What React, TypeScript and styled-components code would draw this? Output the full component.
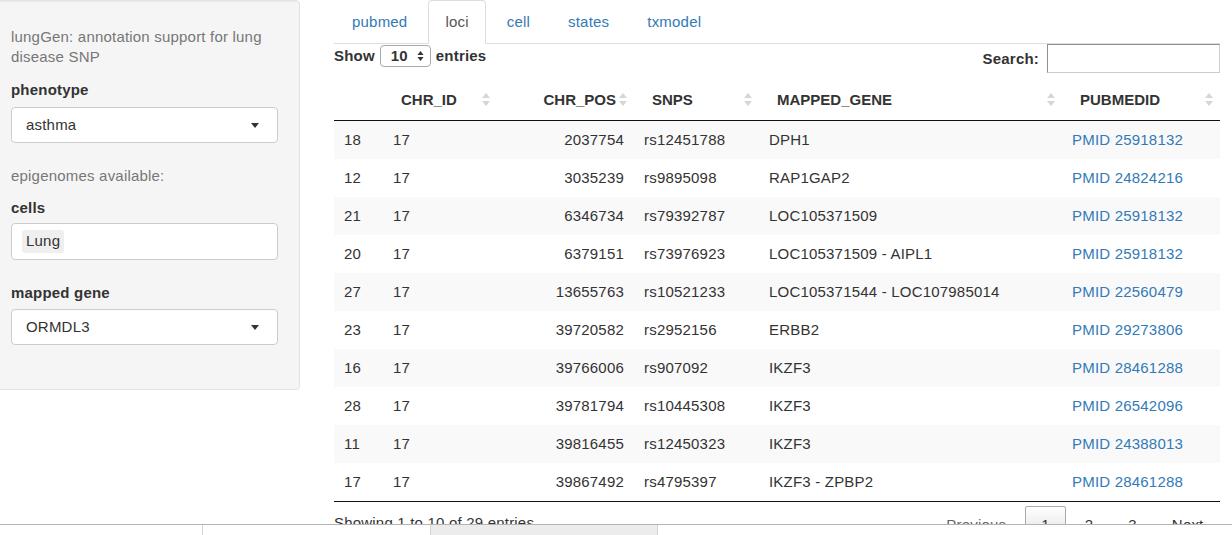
import styled, { createGlobalStyle, css } from 'styled-components';

const GlobalStyle = createGlobalStyle`
  html, body {
    margin: 0;
    padding: 0;
    overflow: hidden;
    background: #fff;
  }
  body {
    font-family: "Liberation Sans", Arial, Helvetica, sans-serif;
    font-size: 15px;
    line-height: 20px;
    letter-spacing: 0.2px;
    color: #333;
  }
  * { box-sizing: border-box; }
`;

type Row = [number, number, number, string, string, string];

const rows: Row[] = [
  [18, 17, 2037754, 'rs12451788', 'DPH1', '25918132'],
  [12, 17, 3035239, 'rs9895098', 'RAP1GAP2', '24824216'],
  [21, 17, 6346734, 'rs79392787', 'LOC105371509', '25918132'],
  [20, 17, 6379151, 'rs73976923', 'LOC105371509 - AIPL1', '25918132'],
  [27, 17, 13655763, 'rs10521233', 'LOC105371544 - LOC107985014', '22560479'],
  [23, 17, 39720582, 'rs2952156', 'ERBB2', '29273806'],
  [16, 17, 39766006, 'rs907092', 'IKZF3', '28461288'],
  [28, 17, 39781794, 'rs10445308', 'IKZF3', '26542096'],
  [11, 17, 39816455, 'rs12450323', 'IKZF3', '24388013'],
  [17, 17, 39867492, 'rs4795397', 'IKZF3 - ZPBP2', '28461288'],
];

const tabs = ['pubmed', 'loci', 'cell', 'states', 'txmodel'];

// column widths of the loci table
const columns = [
  { key: '', width: 49 },
  { key: 'CHR_ID', width: 114 },
  { key: 'CHR_POS', width: 137, right: true },
  { key: 'SNPS', width: 125 },
  { key: 'MAPPED_GENE', width: 303 },
  { key: 'PUBMEDID', width: 158 },
];

const SortIcon = () => (
  <SortSvg width="8" height="15" viewBox="0 0 8 15">
    <path d="M0 6 L4 1 L8 6 Z" fill="#d6d6d6" />
    <path d="M0 9 L4 14 L8 9 Z" fill="#d6d6d6" />
  </SortSvg>
);

const App = () => {
  return (
    <>
      <GlobalStyle />
      <Page>
        <Sidebar>
          <Title>lungGen: annotation support for lung disease SNP</Title>
          <Label $gap={13}>phenotype</Label>
          <SelectBox $gap={7}>
            <span>asthma</span>
            <Caret />
          </SelectBox>
          <Hint>epigenomes available:</Hint>
          <Label $gap={12}>cells</Label>
          <MultiInput>
            <Chip>Lung</Chip>
          </MultiInput>
          <Label $gap={23}>mapped gene</Label>
          <SelectBox $gap={6}>
            <span>ORMDL3</span>
            <Caret />
          </SelectBox>
        </Sidebar>

        <Main>
          <Tabs>
            {tabs.map((t) => (
              <Tab key={t} $active={t === 'loci'}>
                {t}
              </Tab>
            ))}
          </Tabs>

          <Controls>
            <LengthControl>
              Show
              <LengthSelect>
                10
                <svg width="7" height="12" viewBox="0 0 7 12">
                  <path d="M0.5 5 L3.5 1 L6.5 5 Z" fill="#333" />
                  <path d="M0.5 7 L3.5 11 L6.5 7 Z" fill="#333" />
                </svg>
              </LengthSelect>
              entries
            </LengthControl>
            <SearchControl>
              Search:
              <SearchInput />
            </SearchControl>
          </Controls>

          <Table>
            <colgroup>
              {columns.map((c, i) => (
                <col key={i} style={{ width: c.width }} />
              ))}
            </colgroup>
            <thead>
              <tr>
                {columns.map((c, i) => (
                  <Th key={i} $right={c.right}>
                    {c.key}
                    {c.key && <SortIcon />}
                  </Th>
                ))}
              </tr>
            </thead>
            <tbody>
              {rows.map((r, i) => (
                <Tr key={r[0]} $odd={i % 2 === 0}>
                  <Td>{r[0]}</Td>
                  <Td>{r[1]}</Td>
                  <Td $right>{r[2]}</Td>
                  <Td>{r[3]}</Td>
                  <Td>{r[4]}</Td>
                  <Td>
                    <Link>PMID {r[5]}</Link>
                  </Td>
                </Tr>
              ))}
            </tbody>
          </Table>

          <Footer>
            <Info>Showing 1 to 10 of 29 entries</Info>
            <Pagination>
              <PageButton $disabled>Previous</PageButton>
              <PageButton $current>1</PageButton>
              <PageButton>2</PageButton>
              <PageButton>3</PageButton>
              <PageButton>Next</PageButton>
            </Pagination>
          </Footer>
        </Main>
      </Page>

      <BottomBar>
        <Segment $width={202} />
        <Segment $width={228} $divider />
        <Segment $width={227} $divider $shade />
        <Segment $divider />
      </BottomBar>
    </>
  );
};

const Page = styled.div`
  display: flex;
  align-items: flex-start;
  gap: 34px;
`;

const Sidebar = styled.div`
  flex-shrink: 0;
  width: 308px;
  margin-left: -8px;
  padding: 26px 21px 44px 18px;
  background-color: #f5f5f5;
  border: 1px solid #e3e3e3;
  border-radius: 4px;
  box-shadow: inset 0 1px 1px rgba(0, 0, 0, 0.05);
`;

const Title = styled.div`
  color: #777;
  line-height: 20px;
`;

const Label = styled.div<{ $gap: number }>`
  margin-top: ${({ $gap }) => $gap}px;
  font-weight: bold;
  line-height: 20px;
`;

const Hint = styled.div`
  margin-top: 23px;
  color: #777;
`;

const SelectBox = styled.div<{ $gap: number }>`
  display: flex;
  align-items: center;
  justify-content: space-between;
  height: 36px;
  margin-top: ${({ $gap }) => $gap}px;
  padding: 0 18px 0 14px;
  background: #fff;
  border: 1px solid #ccc;
  border-radius: 4px;
  color: #333;
`;

const Caret = styled.span`
  width: 0;
  height: 0;
  border-style: solid;
  border-width: 5px 4.5px 0 4.5px;
  border-color: #333 transparent transparent transparent;
`;

const MultiInput = styled.div`
  display: flex;
  align-items: center;
  height: 37px;
  margin-top: 5px;
  padding: 0 10px;
  background: #fff;
  border: 1px solid #ccc;
  border-radius: 4px;
`;

const Chip = styled.span`
  padding: 1px 4px 2px;
  background: #efefef;
  border-radius: 3px;
  line-height: 20px;
  color: #333;
`;

const Main = styled.div`
  flex-shrink: 0;
  width: 886px;
  display: flex;
  flex-direction: column;
`;

const Tabs = styled.div`
  display: flex;
  height: 44px;
  padding-left: 1px;
  border-bottom: 1px solid #ddd;
`;

const Tab = styled.div<{ $active?: boolean }>`
  height: 44px;
  margin-right: 4px;
  padding: 11px 16px;
  line-height: 20px;
  border: 1px solid transparent;
  border-radius: 4px 4px 0 0;
  color: #337ab7;
  cursor: pointer;

  ${({ $active }) =>
    $active &&
    css`
      color: #555;
      background: #fff;
      border-color: #ddd #ddd transparent;
    `}
`;

const Controls = styled.div`
  display: flex;
  justify-content: space-between;
  align-items: flex-start;
  height: 29px;
`;

const LengthControl = styled.div`
  display: flex;
  align-items: center;
  gap: 5px;
  margin-top: 1px;
  height: 22px;
  font-weight: bold;
`;

const LengthSelect = styled.div`
  display: flex;
  align-items: center;
  justify-content: space-between;
  width: 51px;
  height: 22px;
  padding: 0 6px 0 10px;
  border: 1px solid #aaa;
  border-radius: 4px;
  background: #fff;
  font-weight: bold;
`;

const SearchControl = styled.div`
  display: flex;
  align-items: center;
  gap: 8px;
  height: 29px;
  font-weight: bold;
`;

const SearchInput = styled.div`
  width: 173px;
  height: 29px;
  border: 1px solid #ccc;
  border-top-color: #8f8f8f;
  border-left-color: #8f8f8f;
  background: #fff;
`;

const Table = styled.table`
  width: 886px;
  margin-top: 6px;
  table-layout: fixed;
  border-collapse: collapse;
  border-bottom: 1px solid #111;
`;

const Th = styled.th<{ $right?: boolean }>`
  position: relative;
  padding: 10px 18px;
  line-height: 21px;
  font-weight: bold;
  text-align: ${({ $right }) => ($right ? 'right' : 'left')};
  border-bottom: 1px solid #111;
  white-space: nowrap;
  letter-spacing: 0;
`;

const SortSvg = styled.svg`
  position: absolute;
  right: 7px;
  top: 13px;
`;

const Tr = styled.tr<{ $odd: boolean }>`
  background-color: ${({ $odd }) => ($odd ? '#f9f9f9' : '#fff')};

  & + & td {
    border-top: 1px solid #ddd;
  }
`;

const Td = styled.td<{ $right?: boolean }>`
  padding: 8px 10px;
  line-height: 22px;
  text-align: ${({ $right }) => ($right ? 'right' : 'left')};
  white-space: nowrap;
`;

const Link = styled.a`
  color: #337ab7;
  text-decoration: none;
  cursor: pointer;
`;

const Footer = styled.div`
  display: flex;
  justify-content: space-between;
  align-items: flex-start;
`;

const Info = styled.div`
  padding-top: 11px;
  line-height: 20px;
`;

const Pagination = styled.div`
  display: flex;
  padding-top: 4px;
`;

const PageButton = styled.span<{ $current?: boolean; $disabled?: boolean }>`
  margin-left: 2px;
  padding: 8px 15.5px;
  line-height: 20px;
  border: 1px solid transparent;
  border-radius: 2px;
  color: ${({ $disabled }) => ($disabled ? '#666' : '#333')};
  cursor: pointer;

  ${({ $current }) =>
    $current &&
    css`
      border-color: #aaa;
      background: linear-gradient(to bottom, #fff 0%, #dcdcdc 100%);
    `}
`;

const BottomBar = styled.div`
  position: fixed;
  left: 0;
  right: 0;
  bottom: 0;
  height: 11px;
  display: flex;
  background: #fff;
  border-top: 1px solid #b4b4b4;
`;

const Segment = styled.div<{ $width?: number; $divider?: boolean; $shade?: boolean }>`
  flex: ${({ $width }) => ($width ? `0 0 ${$width}px` : '1')};
  background: ${({ $shade }) => ($shade ? '#ececec' : '#fff')};
  border-left: ${({ $divider }) => ($divider ? '1px solid #d4d4d4' : 'none')};
`;

export default App;
